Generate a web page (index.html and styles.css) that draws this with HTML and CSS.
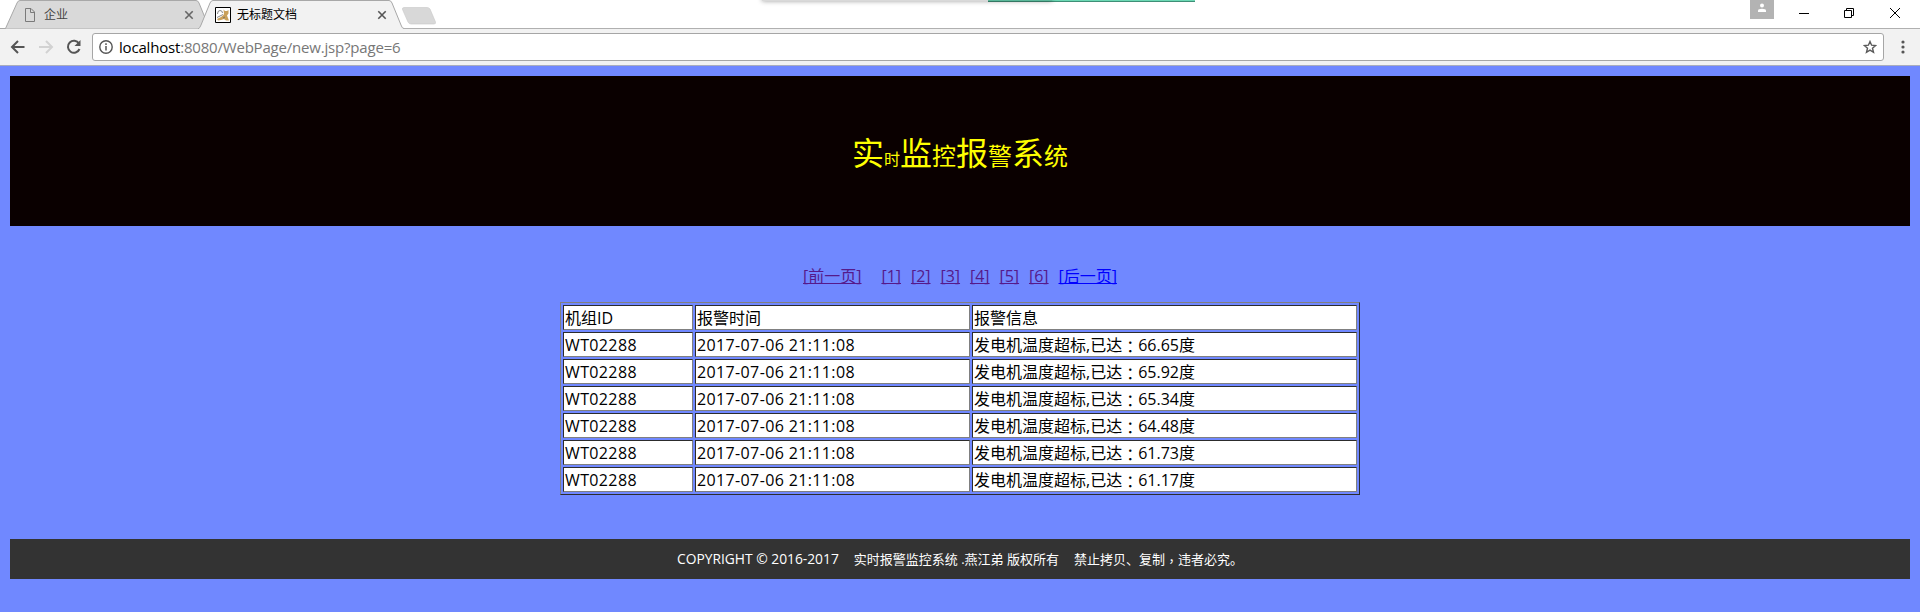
FILE: index.html
```html
<!DOCTYPE html>
<html lang="zh-CN">
<head>
<meta charset="utf-8">
<title>无标题文档</title>
<link rel="stylesheet" href="styles.css">
</head>
<body>
<header class="browser">
  <div class="tabstrip">
    <svg class="tab-shapes" width="460" height="29" viewBox="0 0 460 29">
      <path d="M0 28.500H5.500L17 3Q18 .5 20 .5H196Q198 .5 199 3L208 25Q209 28.500 211 28.500" fill="#d9d9d9" stroke="#a8a8a8"/>
      <path d="M198 29Q200 28 201 25L210 3Q211 .5 213 .5H389Q391 .5 392 3L401 25Q402 28.500 404 28.500V30H198Z" fill="#f2f2f2" stroke="#a8a8a8"/>
      <path d="M404 28.500H460" stroke="#b0b0b0"/>
      <path d="M404 7.500H427Q429 7.500 430 9L435.500 22Q436 24 434 24H411Q409 24 408 22L402.500 9.500Q402 7.500 404 7.500Z" fill="#d8d8d8" stroke="#c8c8c8" stroke-width=".6"/>
    </svg>
    <div class="tab">
      <svg class="fav" width="16" height="16" viewBox="0 0 16 16" fill="none" stroke="#7a7a7a"><path d="M3.500 1.500H9L12.500 5V14.500H3.500ZM8.500 1.500V5.500H12.500"/></svg>
      <span class="tab-title dim">企业</span>
      <svg class="x" width="10" height="10" viewBox="0 0 10 10" stroke="#666" stroke-width="1.600"><path d="M1.300 1.300 8.700 8.700M8.700 1.300 1.300 8.700"/></svg>
    </div>
    <div class="tab">
      <svg class="fav" width="16" height="16" viewBox="0 0 16 16"><path d="M.5.5H15.500V15.500H.5Z" fill="#fff" stroke="#000"/><path d="M8.500 2.500 10 4H12L13.500 3V6.500L12 8.500 13 11 14 13.500H11L9 12 6 13 3 13.500 2 12 6 10 8 8.500 9 7Z" fill="#c9a05a"/><path d="M2.500 7Q2.500 3.500 5 3.500T7.500 6M2 10.500 6 8.500 8 7.500M8 11 10 10" stroke="#6a6a6a" fill="none" stroke-width=".8"/></svg>
      <span class="tab-title">无标题文档</span>
      <svg class="x" width="10" height="10" viewBox="0 0 10 10" stroke="#555" stroke-width="1.600"><path d="M1.300 1.300 8.700 8.700M8.700 1.300 1.300 8.700"/></svg>
    </div>
    <div class="win">
      <svg class="user" width="24" height="19" viewBox="0 0 24 19"><path d="M0 0H24V19H0Z" fill="#b3b3b3"/><circle cx="12" cy="5.500" r="2" fill="#fff"/><path d="M8 12V10.500Q8 8.800 12 8.800T16 10.500V12Z" fill="#fff"/></svg>
      <svg width="102" height="12" viewBox="0 0 102 12" fill="none" stroke="#000"><path d="M0 6.500H10M45.500 3.500H52.500V10.500H45.500ZM47.500 3V1.500H54.500V8.500H53M91 1 101 11M101 1 91 11"/></svg>
    </div>
  </div>
  <div class="toolbar">
    <svg class="nav" width="72" height="16" viewBox="0 0 72 16" fill="none" stroke-width="2"><path d="M14.500 8H2M8 2 2 8 8 14" stroke="#555"/><path d="M29 8H42M36 2 42 8 36 14" stroke="#d2d2d2"/><path d="M69 4.500A6 6 0 1 0 69.500 10" stroke="#555"/><path d="M70.500 1V7H64.500Z" fill="#555"/></svg>
    <div class="omnibox">
      <svg width="14" height="14" viewBox="0 0 14 14" fill="none" stroke="#555"><circle cx="7" cy="7" r="6.200" stroke-width="1.400"/><path d="M7 6V10.500M7 3.300V5" stroke-width="1.500"/></svg>
      <span class="url"><b>localhost</b>:8080/WebPage/new.jsp?page=6</span>
      <svg class="star" width="14" height="14" viewBox="0 0 14 14" fill="none" stroke="#5a5a5a" stroke-width="1.400"><path d="M7 1.500 8.600 5.200 12.600 5.500 9.500 8.200 10.500 12.300 7 10.100 3.500 12.300 4.500 8.200 1.400 5.500 5.400 5.200Z"/></svg>
    </div>
    <svg class="menu" width="4" height="14" viewBox="0 0 4 14" fill="#555"><circle cx="2" cy="2" r="1.600"/><circle cx="2" cy="7" r="1.600"/><circle cx="2" cy="12" r="1.600"/></svg>
  </div>
  <div class="float-green"></div>
  <div class="float-shadow"></div>
</header>
<main class="page">
  <h1 class="banner"><span class="l">实</span><span class="s">时</span><span class="l">监</span><span>控</span><span class="l">报</span><span>警</span><span class="l">系</span><span>统</span></h1>
  <nav class="pager"><a class="prev">[前一页]</a><a>[1]</a><a>[2]</a><a>[3]</a><a>[4]</a><a>[5]</a><a>[6]</a><a class="next">[后一页]</a></nav>
  <table class="alarms">
    <colgroup><col class="c1"><col class="c2"><col class="c3"></colgroup>
    <tr><td>机组ID</td><td>报警时间</td><td>报警信息</td></tr>
    <tr><td class="id">WT02288</td><td class="time">2017-07-06 21:11:08</td><td>发电机温度超标,已达<i lang="zh-TW">：</i><span class="num">66.65</span>度</td></tr>
    <tr><td class="id">WT02288</td><td class="time">2017-07-06 21:11:08</td><td>发电机温度超标,已达<i lang="zh-TW">：</i><span class="num">65.92</span>度</td></tr>
    <tr><td class="id">WT02288</td><td class="time">2017-07-06 21:11:08</td><td>发电机温度超标,已达<i lang="zh-TW">：</i><span class="num">65.34</span>度</td></tr>
    <tr><td class="id">WT02288</td><td class="time">2017-07-06 21:11:08</td><td>发电机温度超标,已达<i lang="zh-TW">：</i><span class="num">64.48</span>度</td></tr>
    <tr><td class="id">WT02288</td><td class="time">2017-07-06 21:11:08</td><td>发电机温度超标,已达<i lang="zh-TW">：</i><span class="num">61.73</span>度</td></tr>
    <tr><td class="id">WT02288</td><td class="time">2017-07-06 21:11:08</td><td>发电机温度超标,已达<i lang="zh-TW">：</i><span class="num">61.17</span>度</td></tr>
  </table>
  <footer class="copyright"><span class="en">COPYRIGHT © 2016-2017</span><span>实时报警监控系统 .燕江弟 版权所有</span><span>禁止拷贝、复制<i lang="zh-TW">，</i>违者必究。</span></footer>
</main>
</body>
</html>
```
FILE: styles.css
```css
* { box-sizing: border-box; }
body { margin: 0; height: 612px; overflow: hidden; background: #7088ff; font-family: "Open Sans", "Noto Sans CJK SC", sans-serif; font-size: 16px; color: #000; }
svg { display: block; flex: none; }
i { font-style: normal; font-family: "Noto Sans CJK TC", sans-serif; line-height: 0; vertical-align: -2px; }
.browser { position: relative; height: 66px; background: #f2f2f2; border-bottom: 1px solid #a9adbd; }
.tabstrip { position: relative; display: flex; height: 29px; background: #fff; border-bottom: 1px solid #b0b0b0; }
.tab-shapes { position: absolute; left: 0; top: 0; }
.tab { position: relative; display: flex; align-items: center; width: 193px; height: 28px; padding: 1px 10px 0 22px; font-size: 12px; }
.tab-title { margin-left: 6px; line-height: 18px; }
.dim { color: #444; }
.x { margin-left: auto; margin-right: -11px; }
.win { display: flex; margin-left: auto; padding-right: 19px; gap: 25px; }
.win svg + svg { margin-top: 7px; }
.toolbar { display: flex; align-items: center; height: 36px; padding: 0 15px 0 10px; }
.omnibox { display: flex; align-items: center; flex: 1; height: 28px; margin-left: 10px; padding: 0 6px; background: #fff; border: 1px solid #a6a6a6; border-radius: 3px; }
.url { margin-left: 6px; font-size: 15px; color: #777; line-height: 20px; letter-spacing: -.19px; }
.url b { font-weight: 400; color: #000; }
.star { margin-left: auto; }
.menu { margin-left: 17px; }
.float-green { position: absolute; left: 988px; top: 0; width: 207px; height: 2px; background: #6cd9b5; border-bottom: 1px solid #3f8f77; }
.float-shadow { position: absolute; left: 762px; top: -4px; width: 290px; height: 5px; background: rgba(0,0,0,.15); box-shadow: 0 0 5px rgba(0,0,0,.4); }
.page { padding: 10px; }
.banner { display: flex; align-items: baseline; justify-content: center; height: 150px; margin: 0; padding-top: 54px; background: #0a0000; color: #ff0; font-size: 24px; font-weight: 400; line-height: 46px; }
.banner .l { font-size: 32px; }
.banner .s { font-size: 16px; }
.pager { display: flex; justify-content: center; height: 76px; padding-top: 39px; line-height: 22px; gap: 9.9px; }
.pager a { color: #551a8b; text-decoration: underline; text-decoration-skip-ink: none; }
.pager .prev { margin-right: 10px; }
.pager .next { color: #00f; }
.alarms { table-layout: fixed; width: 800px; margin: 0 auto; border: 1px solid; border-color: #808080 #2c2c2c #2c2c2c #808080; border-spacing: 2px; }
.c1 { width: 130px; }
.c2 { width: 275px; }
.c3 { width: 385px; }
.alarms td { height: 25px; padding: 1px 1px 0; background: #fff; border: 1px solid; border-color: #2c2c2c #808080 #808080 #2c2c2c; line-height: 22px; white-space: nowrap; }
.alarms .id, .alarms .time { letter-spacing: .37px; }
.copyright { display: flex; align-items: baseline; justify-content: center; height: 40px; margin-top: 44px; gap: 15px; background: #333; color: #fff; font-size: 13px; line-height: 40px; }
.copyright .en { font-size: 13.8px; }
```
